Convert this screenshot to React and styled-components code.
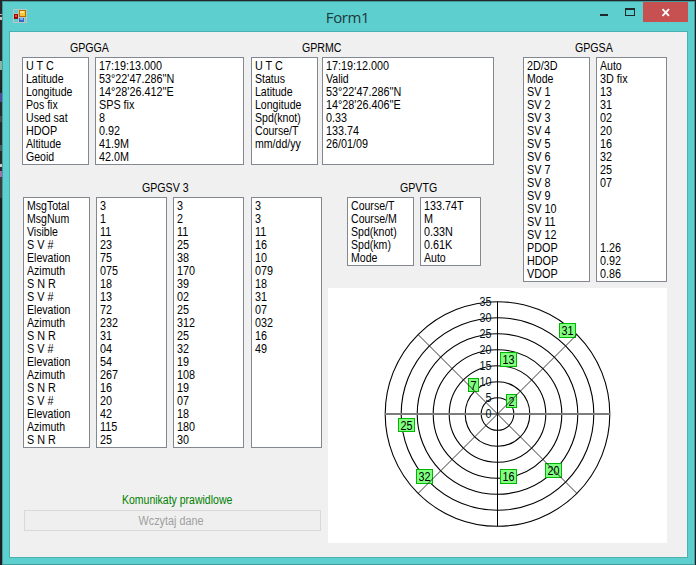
import React from "react";
import styled, { createGlobalStyle } from "styled-components";

const GlobalStyle = createGlobalStyle`
  * { box-sizing: border-box; }
  body { margin: 0; overflow: hidden; }
`;

const Backdrop = styled.div`
  width: 696px;
  height: 565px;
  padding: 1px 1px 0 2px;
  font-family: "Liberation Sans", Arial, sans-serif;
  font-size: 12px;
  line-height: 14px;
  color: #000;
  background:
    linear-gradient(#1c1f23, #1c1f23) right / 2px 100% no-repeat,
    linear-gradient(
      #26262b 0 14px, #b9b9b4 14px 15px, #2b2b2d 15px 17px, #c6c6c0 17px 20px, #29292c 20px 61px,
      #86b5a4 61px 70px, #242427 70px 93px, #4c4c9a 93px 102px, #29292b 102px 116px, #46464b 116px 122px,
      #29292b 122px 145px, #42605f 145px 151px, #2a2a2b 151px 164px, #c8c8c8 164px 167px, #2b2630 167px 171px,
      #a46fb0 171px 177px, #3d3d40 177px 198px, #1f1f21 198px
    );
`;

const Window = styled.div`
  height: 564px;
  display: flex;
  flex-direction: column;
  padding: 0 7px 7px;
  background: #5dcfcf;
  border: 1px solid #439c9c;
`;

const TitleBar = styled.div`
  height: 29px;
  display: grid;
  grid-template-columns: 91px 1fr 96px;
  padding-left: 3px;
`;

const AppIcon = styled.svg`
  margin-top: 7px;
`;

const Title = styled.div`
  padding-top: 4px;
  text-align: center;
  font-family: "Open Sans", sans-serif;
  font-size: 15px;
  line-height: 22px;
  letter-spacing: -0.4px;
  color: #20383b;
`;

const WindowButtons = styled.div`
  display: flex;
  justify-content: flex-end;
  margin-right: -1px;
`;

const WindowButton = styled.div`
  width: ${(p) => p.$width}px;
  height: 20px;
  background: ${(p) => (p.$close ? "#c75050" : "transparent")};
`;

const Client = styled.div`
  flex: 1;
  display: grid;
  grid-template-columns: 306px 195px 144px;
  grid-template-rows: 140px 116px 255px;
  padding-left: 12px;
  background: #f0f0f0;
  outline: 1px solid #4bb0b0;
  margin: 1px 0 0;
`;

const TopArea = styled.div`
  grid-area: 1 / 1 / 2 / 3;
  display: flex;
  gap: 7px;
`;

const SatelliteArea = styled.div`
  grid-area: 1 / 3 / 3 / 4;
`;

const ViewArea = styled.div`
  grid-area: 2 / 1 / 4 / 2;
  padding-left: 1px;
`;

const CourseArea = styled.div`
  grid-area: 2 / 2 / 3 / 3;
  padding-left: 19px;
`;

const Radar = styled.svg`
  grid-area: 3 / 2 / 4 / 4;
  background: #fff;
`;

const Heading = styled.div`
  height: 25px;
  padding: 9px 0 0 ${(p) => p.$indent}px;
`;

const Lists = styled.div`
  display: grid;
  grid-template-columns: ${(p) => p.$columns};
`;

const ListBox = styled.div`
  width: ${(p) => p.$width}px;
  height: ${(p) => p.$rows * 13 + 4}px;
  padding: 1px 3px;
  background: #fff;
  border: 1px solid #828790;
`;

const Row = styled.div`
  height: 13px;
`;

const Narrow = styled.span`
  display: inline-block;
  white-space: pre;
  transform: scaleX(${(p) => p.$scale || 0.9});
  transform-origin: ${(p) => p.$origin || "left"};
`;

const Status = styled.div`
  height: 13px;
  margin-top: 45px;
  padding-left: 99px;
  color: #008000;
`;

const ReadButton = styled.button`
  display: block;
  width: 297px;
  height: 21px;
  margin: 4px 0 0 1px;
  padding: 1px 2px 0 0;
  font: inherit;
  text-align: center;
  color: #a0a0a0;
  background: #efefef;
  border: 1px solid #d9d9d9;
`;

function List({ items, width, rows }) {
  return (
    <ListBox $width={width} $rows={rows}>
      {items.map((item, i) => (
        <Row key={i}>
          <Narrow $scale={/^[A-Z]?[a-z]/.test(item) ? 0.88 : 0.9}>{item}</Narrow>
        </Row>
      ))}
    </ListBox>
  );
}

function Group({ title, indent, columns, lists, widths, rows }) {
  return (
    <div>
      <Heading $indent={indent}><Narrow $scale={0.885}>{title}</Narrow></Heading>
      <Lists $columns={columns}>
        {lists.map((items, i) => <List key={i} items={items} width={widths[i]} rows={rows} />)}
      </Lists>
    </div>
  );
}

const gga = [
  ["U T C", "Latitude", "Longitude", "Pos fix", "Used sat", "HDOP", "Altitude", "Geoid"],
  ["17:19:13.000", "53°22'47.286''N", "14°28'26.412''E", "SPS fix", "8", "0.92", "41.9M", "42.0M"],
];
const rmc = [
  ["U T C", "Status", "Latitude", "Longitude", "Spd(knot)", "Course/T", "mm/dd/yy"],
  ["17:19:12.000", "Valid", "53°22'47.286''N", "14°28'26.406''E", "0.33", "133.74", "26/01/09"],
];
const gsa = [
  ["2D/3D", "Mode", ...Array.from({ length: 12 }, (_, i) => `SV ${i + 1}`), "PDOP", "HDOP", "VDOP"],
  ["Auto", "3D fix", "13", "31", "02", "20", "16", "32", "25", "07", "", "", "", "", "1.26", "0.92", "0.86"],
];
const satFields = ["S V #", "Elevation", "Azimuth", "S N R"];
const gsv = [
  ["MsgTotal", "MsgNum", "Visible", ...satFields, ...satFields, ...satFields, ...satFields],
  "3 1 11 23 75 075 18 13 72 232 31 04 54 267 16 20 42 115 25".split(" "),
  "3 2 11 25 38 170 39 02 25 312 25 32 19 108 19 07 18 180 30".split(" "),
  "3 3 11 16 10 079 18 31 07 032 16 49".split(" "),
];
const vtg = [
  ["Course/T", "Course/M", "Spd(knot)", "Spd(km)", "Mode"],
  ["133.74T", "M", "0.33N", "0.61K", "Auto"],
];

const satellites = [
  { id: "31", x: 231, y: 35, h: 15 },
  { id: "13", x: 172, y: 64, h: 15 },
  { id: "2", x: 178, y: 106, h: 14 },
  { id: "7", x: 140, y: 90, h: 14 },
  { id: "25", x: 70, y: 130, h: 14 },
  { id: "32", x: 88, y: 181, h: 15 },
  { id: "16", x: 172, y: 181, h: 15 },
  { id: "20", x: 217, y: 175, h: 15 },
];

function RadarChart() {
  const cx = 169.5;
  const cy = 126;
  return (
    <Radar width="339" height="255" viewBox="0 0 339 255">
      <g fill="none" stroke="#000" strokeWidth="1.1">
        {[1, 2, 3, 4, 5, 6, 7].map((n) => <circle key={n} cx={cx} cy={cy} r={n * 16 + 0.3} />)}
      </g>
      <path d="M57 126H282" stroke="#7c7c7c" strokeWidth="2" />
      <path d="M169.5 14V238" stroke="#000" />
      {satellites.map((s) => (
        <g key={s.id}>
          <rect x={s.x + 0.5} y={s.y + 0.5} width={s.id.length > 1 ? 16 : 10} height={s.h - 1} fill="#80ff80" stroke="#00b400" />
          <text x={s.x + 2.5} y={s.y + 12} fontSize="12" textLength={s.id.length * 6} lengthAdjust="spacingAndGlyphs">{s.id}</text>
        </g>
      ))}
      <path d="M90.5 47L248.5 205M248.5 47L90.5 205" stroke="#222" strokeWidth="0.9" />
      {[0, 5, 10, 15, 20, 25, 30, 35].map((v) => {
        const w = String(v).length * 6;
        return (
          <text key={v} x={163.5 - w} y={130 - (v / 5) * 16} fontSize="12" fill="#001420" textLength={w} lengthAdjust="spacingAndGlyphs">{v}</text>
        );
      })}
    </Radar>
  );
}

export default function App() {
  return (
    <>
      <GlobalStyle />
      <Backdrop>
        <Window>
          <TitleBar>
            <AppIcon width="14" height="14" viewBox="0 0 14 14">
              <rect width="14" height="14" fill="#b9c4c4" />
              <path d="M1 1h4v3H1zM1 10h4v3H1z" fill="#63cccc" />
              <rect x="1" y="5" width="4" height="5" fill="#8d0d0d" />
              <rect x="2" y="6" width="2" height="2" fill="#ed4a36" />
              <rect x="6" y="1" width="7" height="7" fill="#a97500" />
              <rect x="7" y="2" width="5" height="5" fill="#fcc63c" />
              <rect x="7" y="2" width="4" height="2" fill="#ffe68c" />
              <rect x="6" y="9" width="5" height="4" fill="#3569c8" />
              <rect x="7" y="9" width="3" height="2" fill="#75adff" />
              <path d="M12 9h1v4h-1z" fill="#63cccc" />
            </AppIcon>
            <Title>Form1</Title>
            <WindowButtons>
              <WindowButton $width={26}>
                <svg width="26" height="20"><path d="M8 12h8v2H8z" fill="#20282a" /></svg>
              </WindowButton>
              <WindowButton $width={25}>
                <svg width="25" height="20"><path fillRule="evenodd" d="M7 6h10v8H7zM8 8v5h8V8z" fill="#20282a" /></svg>
              </WindowButton>
              <WindowButton $width={45} $close>
                <svg width="45" height="20"><path d="M19.5 7.2L26 13.8M26 7.2L19.5 13.8" stroke="#fff" strokeWidth="1.9" /></svg>
              </WindowButton>
            </WindowButtons>
          </TitleBar>
          <Client>
            <TopArea>
              <Group title="GPGGA" indent={48} columns="73px 149px" widths={[67, 149]} lists={gga} rows={8} />
              <Group title="GPRMC" indent={51} columns="71px 172px" widths={[67, 172]} lists={rmc} rows={8} />
            </TopArea>
            <SatelliteArea>
              <Group title="GPGSA" indent={52} columns="73px 71px" widths={[67, 71]} lists={gsa} rows={17} />
            </SatelliteArea>
            <ViewArea>
              <Group title="GPGSV 3" indent={119} columns="73px 77px 78px 71px" widths={[67, 71, 71, 71]} lists={gsv} rows={19} />
              <Status><Narrow $scale={0.875}>Komunikaty prawidlowe</Narrow></Status>
              <ReadButton disabled><Narrow $origin="center" $scale={0.9}>Wczytaj dane</Narrow></ReadButton>
            </ViewArea>
            <CourseArea>
              <Group title="GPVTG" indent={53} columns="73px 61px" widths={[67, 61]} lists={vtg} rows={5} />
            </CourseArea>
            <RadarChart />
          </Client>
        </Window>
      </Backdrop>
    </>
  );
}
